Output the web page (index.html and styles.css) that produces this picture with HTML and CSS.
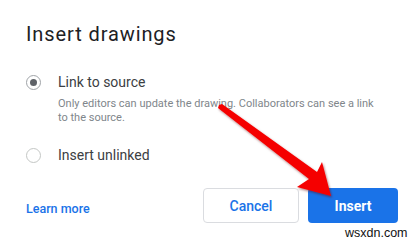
FILE: index.html
```html
<!DOCTYPE html>
<html>
<head>
<meta charset="utf-8">
<link rel="stylesheet" href="styles.css">
</head>
<body>
<div class="dialog">
  <h1 class="title">Insert drawings</h1>
  <div class="option">
    <span class="radio checked"></span>
    <span class="label">Link to source</span>
  </div>
  <p class="desc">Only editors can update the drawing. Collaborators can see a link to the source.</p>
  <div class="option second">
    <span class="radio"></span>
    <span class="label">Insert unlinked</span>
  </div>
  <div class="footer">
    <a class="learn">Learn more</a>
    <div class="buttons">
      <button class="btn cancel">Cancel</button>
      <button class="btn insert">Insert</button>
    </div>
  </div>
</div>
<svg class="arrow" width="419" height="243" viewBox="0 0 419 243">
  <defs>
    <filter id="sh" x="-20%" y="-20%" width="140%" height="140%">
      <feDropShadow dx="1" dy="1.5" stdDeviation="1.2" flood-color="#600" flood-opacity="0.5"/>
    </filter>
  </defs>
  <polygon filter="url(#sh)" fill="#f50000" points="219,105 222,104 317,172 322,162 331,196 297,187 309,179 218,108"/>
</svg>
<div class="watermark">wsxdn.com</div>
</body>
</html>
```
FILE: styles.css
```css
html, body {
  margin: 0;
  padding: 0;
  background: #fff;
}
body {
  width: 419px;
  height: 243px;
  overflow: hidden;
  position: relative;
  font-family: Roboto, "Liberation Sans", sans-serif;
}
.dialog {
  padding: 22px 21px 0 26px;
}
.title {
  margin: 0;
  font-size: 20px;
  line-height: 24px;
  font-weight: 400;
  letter-spacing: 0.9px;
  color: #202124;
}
.option {
  display: flex;
  align-items: center;
  height: 20px;
  margin-top: 26px;
}
.option.second {
  margin-top: 20px;
}
.radio {
  box-sizing: border-box;
  width: 15px;
  height: 15px;
  border: 1.5px solid #c4c7c5;
  border-radius: 50%;
  display: flex;
  align-items: center;
  justify-content: center;
}
.radio.checked {
  border-color: #a0a4a8;
}
.radio.checked::after {
  content: "";
  width: 7px;
  height: 7px;
  border-radius: 50%;
  background: #5f6368;
}
.label {
  margin-left: 17px;
  font-size: 14px;
  color: #3c4043;
}
.desc {
  margin: 5px 0 0 32px;
  max-width: 320px;
  font-size: 11px;
  line-height: 14px;
  color: #80868b;
}
.footer {
  display: flex;
  align-items: center;
  justify-content: space-between;
  margin-top: 23px;
}
.learn {
  font-size: 12.5px;
  font-weight: 500;
  color: #1a73e8;
  margin-top: 5px;
}
.buttons {
  display: flex;
  gap: 9px;
}
.btn {
  box-sizing: border-box;
  height: 35px;
  border-radius: 4px;
  font-family: Roboto, "Liberation Sans", sans-serif;
  font-size: 14px;
  padding: 0;
}
.cancel {
  width: 96px;
  background: #fff;
  border: 1px solid #dadce0;
  color: #1a73e8;
  font-weight: 500;
}
.insert {
  width: 90px;
  background: #1a73e8;
  border: none;
  color: #fff;
  font-weight: 700;
}
.arrow {
  position: absolute;
  left: 0;
  top: 0;
}
.watermark {
  position: absolute;
  left: 345px;
  top: 225px;
  font-family: "Liberation Sans", Arial, sans-serif;
  font-size: 12.5px;
  line-height: 16px;
  color: #111;
}
```
